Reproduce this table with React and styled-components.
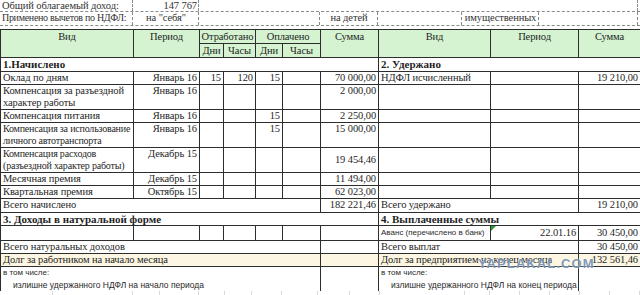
import styled, { createGlobalStyle } from 'styled-components';

const SERIF = `'Liberation Serif', 'DejaVu Serif', serif`;
const SANS = `'Liberation Sans', Arial, sans-serif`;

const GlobalStyle = createGlobalStyle`
  * { box-sizing: border-box; }
  body {
    margin: 0;
    background: #fff;
    font-family: ${SERIF};
  }
`;

const COLS = [133, 66, 24, 32, 27, 38, 58, 112, 88, 62];
const FAINT = [53, 80, 27, 39, 26, 27, 30, 36, 32, 30, 85, 25, 30, 30, 30, 30, 30];

const accruals = [
  { name: ['Оклад по дням'], period: 'Январь 16', d1: '15', h1: '120', d2: '15', sum: '70 000,00', right: ['НДФЛ исчисленный', '', '19 210,00'] },
  { name: ['Компенсация за разъездной', 'характер работы'], period: 'Январь 16', sum: '2 000,00' },
  { name: ['Компенсация питания'], period: 'Январь 16', d2: '15', sum: '2 250,00' },
  { name: ['Компенсация за использование', 'личного автотранспорта'], period: 'Январь 16', d2: '15', sum: '15 000,00', tight: true },
  { name: ['Компенсация расходов', '(разъездной характер работы)'], period: 'Декабрь 15', sum: '19 454,46', sumMid: true, tight: true },
  { name: ['Месячная премия'], period: 'Декабрь 15', sum: '11 494,00' },
  { name: ['Квартальная премия'], period: 'Октябрь 15', sum: '62 023,00' },
];

export default function App() {
  return (
    <Page>
      <GlobalStyle />
      <InfoRow $cols="133px 66px 179px 260px 2px">
        <InfoCell $dashed>Общий облагаемый доход:</InfoCell>
        <InfoCell $dashed $align="right">147 767</InfoCell>
        <InfoCell />
        <InfoCell $dashed />
        <InfoCell $dashed />
      </InfoRow>
      <InfoRow $cols="133px 66px 121px 58px 84px 77px 99px 2px" $h={14}>
        <InfoCell $dashed $tight>Применено вычетов по НДФЛ:</InfoCell>
        <InfoCell $dashed $align="center">на "себя"</InfoCell>
        <InfoCell $dashed />
        <InfoCell $dashed $align="center">на детей</InfoCell>
        <InfoCell $dashed />
        <InfoCell $dashed $align="center">имущественных</InfoCell>
        <InfoCell $dashed />
        <InfoCell />
      </InfoRow>

      <Sheet>
        <colgroup>
          {COLS.map((w, i) => (
            <col key={i} style={{ width: w }} />
          ))}
        </colgroup>
        <tbody>
          <tr>
            <Head rowSpan={2} $h={14}>Вид</Head>
            <Head rowSpan={2}>Период</Head>
            <Head colSpan={2}>Отработано</Head>
            <Head colSpan={2}>Оплачено</Head>
            <Head rowSpan={2}>Сумма</Head>
            <Head rowSpan={2}>Вид</Head>
            <Head rowSpan={2}>Период</Head>
            <Head rowSpan={2}>Сумма</Head>
          </tr>
          <tr>
            <Head $h={12}>Дни</Head>
            <Head>Часы</Head>
            <Head>Дни</Head>
            <Head>Часы</Head>
          </tr>
          <tr>
            <Cell colSpan={7} $h={14} $bold>1.Начислено</Cell>
            <Cell colSpan={3} $bold>2. Удержано</Cell>
          </tr>
          {accruals.map((r) => {
            const h = r.name.length > 1 ? 25 : 13;
            const right = r.right || ['', '', ''];
            return (
              <tr key={r.name[0]}>
                <Cell $h={h} $tight={r.tight}>
                  {r.name.map((line) => (
                    <Line key={line}>{line}</Line>
                  ))}
                </Cell>
                <Cell $align="right">{r.period}</Cell>
                <Cell $align="right">{r.d1}</Cell>
                <Cell $align="right">{r.h1}</Cell>
                <Cell $align="right">{r.d2}</Cell>
                <Cell />
                <Cell $align="right" $valign={r.sumMid ? 'middle' : 'top'}>{r.sum}</Cell>
                <Cell>{right[0]}</Cell>
                <Cell>{right[1]}</Cell>
                <Cell $align="right">{right[2]}</Cell>
              </tr>
            );
          })}
          <tr>
            <Cell colSpan={6} $h={14}>Всего начислено</Cell>
            <Cell $align="right">182 221,46</Cell>
            <Cell colSpan={2}>Всего удержано</Cell>
            <Cell $align="right">19 210,00</Cell>
          </tr>
          <tr>
            <Cell colSpan={7} $h={13} $bold>3. Доходы в натуральной форме</Cell>
            <Cell colSpan={3} $bold>4. Выплаченные суммы</Cell>
          </tr>
          <tr>
            <Cell $h={15} />
            <Cell />
            <Cell />
            <Cell />
            <Cell />
            <Cell />
            <Cell />
            <Cell $valign="middle"><Small>Аванс (перечислено в банк)</Small></Cell>
            <Cell $align="right" $valign="middle" $note>22.01.16</Cell>
            <Cell $align="right" $valign="middle">30 450,00</Cell>
          </tr>
          <tr>
            <Cell colSpan={6} $h={12}>Всего натуральных доходов</Cell>
            <Cell />
            <Cell colSpan={2}>Всего выплат</Cell>
            <Cell $align="right">30 450,00</Cell>
          </tr>
          <tr>
            <Cell colSpan={6} $h={13} $bg="#fcf6e2">Долг за работником на начало месяца</Cell>
            <Cell $bg="#fcf6e2" />
            <Cell colSpan={2} $bg="#fcf6e2">Долг за предприятием на конец месяца</Cell>
            <Cell $align="right" $bg="#fcf6e2">132 561,46</Cell>
          </tr>
          <tr>
            <Cell colSpan={6} $h={24} $open>
              <Small>в том числе:</Small>
              <Small $indent>излишне удержанного НДФЛ на начало периода</Small>
            </Cell>
            <Cell $open />
            <Cell colSpan={2} $open>
              <Small>в том числе:</Small>
              <Small $indent>излишне удержанного НДФЛ на конец периода</Small>
            </Cell>
            <Cell $open />
          </tr>
        </tbody>
      </Sheet>

      <FaintRow>
        {FAINT.map((w, i) => (
          <FaintCell key={i} style={{ width: w }} />
        ))}
      </FaintRow>

      <Watermark>YAPLAKAL.COM</Watermark>
    </Page>
  );
}

const Page = styled.div`
  position: relative;
  width: 640px;
  height: 295px;
  overflow: hidden;
  background: #fff;
  font-family: ${SERIF};
  color: #1f1f1f;
`;

const InfoRow = styled.div`
  display: grid;
  grid-template-columns: ${(p) => p.$cols};
  height: ${(p) => p.$h || 12}px;
  border-bottom: 1px dashed #8a8a8a;
`;

const InfoCell = styled.div`
  border-right: ${(p) => (p.$dashed ? '1px dashed #8a8a8a' : 'none')};
  padding: 0 1px 0 2px;
  font-family: ${SERIF};
  font-size: ${(p) => (p.$tight ? '10px' : '10.5px')};
  letter-spacing: ${(p) => (p.$tight ? '-0.3px' : '-0.1px')};
  line-height: 12px;
  color: #333;
  text-align: ${(p) => p.$align || 'left'};
  white-space: nowrap;
  overflow: hidden;
`;

const Sheet = styled.table`
  margin-top: 3px;
  width: 640px;
  border-collapse: collapse;
  table-layout: fixed;
  font-family: ${SERIF};
  font-size: 10.5px;
  color: #1f1f1f;
`;

const Cell = styled.td`
  position: relative;
  height: ${(p) => (p.$h ? `${p.$h}px` : 'auto')};
  padding: 0 ${(p) => (p.$tight ? '0 0 2px' : '2px')};
  border: 1px solid #2d2d2d;
  border-bottom: ${(p) => (p.$open ? 'none' : '1px solid #2d2d2d')};
  background: ${(p) => p.$bg || 'transparent'};
  text-align: ${(p) => p.$align || 'left'};
  vertical-align: ${(p) => p.$valign || 'top'};
  font-family: ${SERIF};
  font-size: ${(p) => (p.$bold ? '11px' : p.$tight ? '10px' : '10.5px')};
  font-weight: ${(p) => (p.$bold ? 700 : 400)};
  letter-spacing: ${(p) => (p.$bold ? '0' : p.$tight ? '-0.2px' : '-0.1px')};
  line-height: 12px;
  white-space: nowrap;
  overflow: hidden;

  &::before {
    content: '';
    display: ${(p) => (p.$note ? 'block' : 'none')};
    position: absolute;
    left: 0;
    top: 0;
    border-top: 5px solid #2f9a35;
    border-right: 5px solid transparent;
  }
`;

const Head = styled(Cell)`
  background: #d5f3d1;
  text-align: center;
  padding: 1px 0 0;
`;

const Line = styled.div`
  line-height: 12px;
`;

const Small = styled.div`
  font-family: ${SANS};
  font-size: ${(p) => (p.$indent ? '8.5px' : '8px')};
  letter-spacing: 0;
  line-height: 12px;
  color: #2a2a2a;
  padding-left: ${(p) => (p.$indent ? '10px' : '0')};
`;

const FaintRow = styled.div`
  display: flex;
  height: 10px;
`;

const FaintCell = styled.div`
  flex: none;
  border-right: 1px solid #d8d8d8;
`;

const Watermark = styled.div`
  position: absolute;
  left: 478px;
  top: 256px;
  font-family: ${SANS};
  font-size: 13px;
  font-weight: 700;
  letter-spacing: 1.1px;
  color: rgba(92, 126, 170, 0.8);
  text-shadow: 0 0 2px #fff;
  pointer-events: none;
`;
